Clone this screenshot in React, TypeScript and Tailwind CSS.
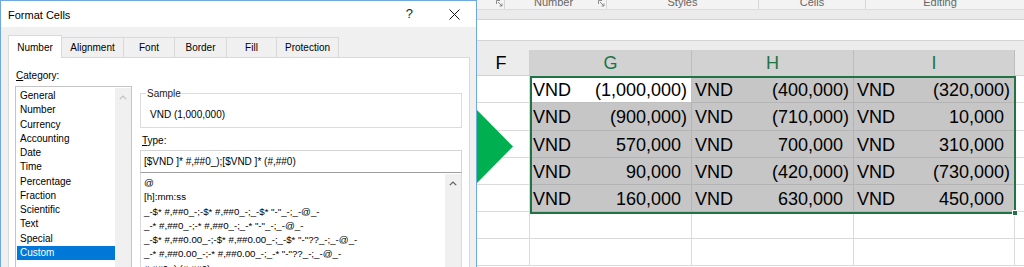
import React from 'react';

const categories = [
  'General',
  'Number',
  'Currency',
  'Accounting',
  'Date',
  'Time',
  'Percentage',
  'Fraction',
  'Scientific',
  'Text',
  'Special',
  'Custom',
];

const formats = [
  '@',
  '[h]:mm:ss',
  '_-$* #,##0_-;-$* #,##0_-;_-$* "-"_-;_-@_-',
  '_-* #,##0_-;-* #,##0_-;_-* "-"_-;_-@_-',
  '_-$* #,##0.00_-;-$* #,##0.00_-;_-$* "-"??_-;_-@_-',
  '_-* #,##0.00_-;-* #,##0.00_-;_-* "-"??_-;_-@_-',
  '#,##0_);(#,##0)',
];

const tabs = [
  { label: 'Number', w: 'w-[54px]', active: true },
  { label: 'Alignment', w: 'w-[63px]' },
  { label: 'Font', w: 'w-[52px]' },
  { label: 'Border', w: 'w-[53px]' },
  { label: 'Fill', w: 'w-[51px]' },
  { label: 'Protection', w: 'w-[63px]' },
];

// rows of [G, H, I]
const rows = [
  ['(1,000,000)', '(400,000)', '(320,000)'],
  ['(900,000)', '(710,000)', '10,000'],
  ['570,000', '700,000', '310,000'],
  ['90,000', '(420,000)', '(730,000)'],
  ['160,000', '630,000', '450,000'],
];

const colW = ['w-[162px]', 'w-[162px]', 'w-[161px]'];

const Chevron = ({ color }: { color: string }) => (
  <svg width="8" height="5" viewBox="0 0 8 5" className="mx-auto">
    <path d="M0.8 4.2 L4 1 L7.2 4.2" fill="none" stroke={color} strokeWidth="1.2" />
  </svg>
);

const Launcher = () => (
  <svg width="7" height="7" viewBox="0 0 7 7">
    <path d="M0.5 4 V0.5 H4" fill="none" stroke="#8a8a8a" strokeWidth="1" />
    <path d="M2 2 L6 6 M6 3.5 V6 H3.5" fill="none" stroke="#8a8a8a" strokeWidth="1" />
  </svg>
);

const FormatCells = () => (
  <div className="w-[477px] h-full shrink-0 flex flex-col border-x border-t border-[#6fa8dc] bg-[#f0f0f0] overflow-hidden font-['Liberation_Sans',Arial,sans-serif] text-black">
    {/* title bar */}
    <div className="h-[26px] shrink-0 bg-white flex items-center pl-[7px]">
      <span className="text-[11px] leading-[14px] pt-[2px]">Format Cells</span>
      <span className="ml-auto mr-[36px] text-[13px] leading-[14px] text-[#222]">?</span>
      <svg width="11" height="11" viewBox="0 0 11 11" className="mr-[16px]">
        <path d="M0.5 0.5 L10.5 10.5 M10.5 0.5 L0.5 10.5" stroke="#111" strokeWidth="1" />
      </svg>
    </div>

    {/* tabs */}
    <div className="h-[30px] shrink-0 pt-[8px] pl-[7px] flex items-end">
      {tabs.map((t, i) =>
        t.active ? (
          <div
            key={t.label}
            className={`${t.w} h-[23px] -mb-px relative z-10 bg-white border border-b-0 border-[#d9d9d9] flex items-center justify-center text-[10px]`}
          >
            {t.label}
          </div>
        ) : (
          <div
            key={t.label}
            className={`${t.w} h-[20px] ${i > 0 ? '-ml-px' : ''} bg-[#f0f0f0] border border-b-0 border-[#d9d9d9] flex items-center justify-center text-[10px]`}
          >
            {t.label}
          </div>
        )
      )}
    </div>

    {/* panel */}
    <div className="ml-[7px] w-[462px] flex-1 bg-white border border-[#d9d9d9] flex pt-[11px] pl-[6px] text-[10px]">
      {/* category */}
      <div className="w-[117px] shrink-0">
        <div className="h-[14px] leading-[14px] pl-px">
          <span className="underline">C</span>ategory:
        </div>
        <div className="mt-[3px] h-[200px] border border-[#c4c4c4] flex">
          <div className="flex-1 pt-[2px] pl-px">
            {categories.map((c) => (
              <div
                key={c}
                className={`h-[14.27px] leading-[14.27px] pl-[3px] ${c === 'Custom' ? 'bg-[#0078d7] text-white' : ''}`}
              >
                {c}
              </div>
            ))}
          </div>
          <div className="w-[16px] bg-[#f0f0f0] mt-px pt-[7px]">
            <Chevron color="#c2c2c2" />
          </div>
        </div>
      </div>

      {/* right column */}
      <div className="w-[322px] ml-[8px] shrink-0">
        <div className="mt-[24px] relative h-[35px] border border-[#dcdcdc]">
          <span className="absolute -top-[7px] left-[5px] px-px bg-white leading-[14px] text-[#222]">Sample</span>
          <div className="pt-[14px] pl-[9px] leading-[14px]">VND (1,000,000)</div>
        </div>

        <div className="mt-[6px] h-[14px] leading-[14px] pl-[2px]">
          <span className="underline">T</span>ype:
        </div>

        <div className="mt-[2px] h-[22px] border border-b-0 border-[#d4d4d4] pl-[3px] leading-[21px] whitespace-pre">
          [$VND ]* #,##0_);[$VND ]* (#,##0)
        </div>

        <div className="h-[120px] border border-[#dadada] border-t-[#9f9f9f] flex">
          <div className="flex-1 pt-[3px] pl-[3px] overflow-hidden">
            {formats.map((f) => (
              <div key={f} className="h-[14.27px] leading-[14.27px] whitespace-pre text-[9.7px]">
                {f}
              </div>
            ))}
          </div>
          <div className="w-[16px] bg-[#f0f0f0] mt-px pt-[7px]">
            <Chevron color="#606060" />
          </div>
        </div>
      </div>
    </div>
  </div>
);

const Cell = ({ value, selected, active, w }: { value: string; selected: boolean; active?: boolean; w: string }) => {
  const neg = value.startsWith('(');
  const bg = active ? 'bg-white border-[#c0c0c0]' : selected ? 'bg-[#c6c6c6] border-[#b4b4b4]' : 'bg-white border-[#dadada]';
  return (
    <div className={`${w} h-full shrink-0 border-r border-b ${bg} flex items-center pt-[2px] pl-[3px] pr-[4px] text-[18px] leading-[20px]`}>
      <span>VND</span>
      <span className="ml-auto">
        {value}
        {!neg && <span className="invisible">)</span>}
      </span>
    </div>
  );
};

const Sheet = () => (
  <div className="flex-1 h-full relative flex flex-col bg-white overflow-hidden font-['Liberation_Sans',Arial,sans-serif]">
    {/* ribbon group labels, cut off at the top */}
    <div className="h-[10px] shrink-0 bg-[#f3f3f3] border-b border-[#dcdcdc] flex overflow-hidden text-[11px] text-[#666]">
      <div className="w-[28px] shrink-0 border-r border-[#d6d6d6] flex justify-end pr-[1px]">
        <Launcher />
      </div>
      <div className="w-[102px] shrink-0 border-r border-[#d6d6d6] flex">
        <span className="flex-1 text-center leading-[11px] -mt-[3px] pl-[4px]">Number</span>
        <div className="pr-[1px]">
          <Launcher />
        </div>
      </div>
      <div className="w-[152px] shrink-0 border-r border-[#d6d6d6] text-center leading-[11px] -mt-[3px] pt-0">Styles</div>
      <div className="w-[107px] shrink-0 border-r border-[#d6d6d6] text-center leading-[11px] -mt-[3px]">Cells</div>
      <div className="w-[148px] shrink-0 text-center leading-[11px] -mt-[3px]">Editing</div>
    </div>
    <div className="h-[10px] shrink-0 bg-[#ebebeb] border-b border-[#d4d4d4]" />
    <div className="h-[21px] shrink-0 bg-white border-b border-[#d4d4d4]" />
    <div className="h-[9px] shrink-0 bg-[#ececec]" />

    {/* column headers */}
    <div className="h-[26px] shrink-0 flex text-[18px] leading-[20px]">
      <div className="w-[53px] shrink-0 bg-[#ececec] border-b border-r border-[#d0d0d0] flex items-center justify-center pr-[4px]">F</div>
      {['G', 'H', 'I'].map((c, i) => (
        <div
          key={c}
          className={`${colW[i]} shrink-0 bg-[#d2d2d2] border-r border-[#bdbdbd] flex items-center justify-center text-[#217346]`}
        >
          {c}
        </div>
      ))}
      <div className="flex-1 bg-[#ececec] border-b border-[#d0d0d0]" />
    </div>

    {/* data rows */}
    {rows.map((r, ri) => (
      <div key={ri} className="h-[27.3px] shrink-0 flex">
        <div className="w-[53px] shrink-0 border-r border-b border-[#dadada]" />
        {r.map((v, ci) => (
          <Cell key={ci} value={v} selected w={colW[ci]} active={ri === 0 && ci === 0} />
        ))}
        <div className="flex-1 border-b border-[#dadada]" />
      </div>
    ))}
    {[0, 1].map((k) => (
      <div key={k} className="h-[27px] shrink-0 flex">
        <div className="w-[53px] shrink-0 border-r border-b border-[#dadada]" />
        {colW.map((w, ci) => (
          <div key={ci} className={`${w} shrink-0 border-r border-b border-[#dadada]`} />
        ))}
        <div className="flex-1 border-b border-[#dadada]" />
      </div>
    ))}

    {/* selection outline */}
    <div className="absolute top-[76px] left-[53px] w-[486px] h-[138px] border-2 border-[#217346]">
      <div className="absolute -right-[4px] -bottom-[4px] w-[6px] h-[6px] bg-[#217346] border border-white" />
    </div>

    {/* green arrow */}
    <svg className="absolute left-0 top-[110px]" width="37" height="73" viewBox="0 0 37 73">
      <polygon points="0,0 36,36.5 0,73" fill="#00b050" />
    </svg>
  </div>
);

export default function App() {
  return (
    <div className="w-[1024px] h-[267px] overflow-hidden flex bg-white">
      <FormatCells />
      <Sheet />
    </div>
  );
}
